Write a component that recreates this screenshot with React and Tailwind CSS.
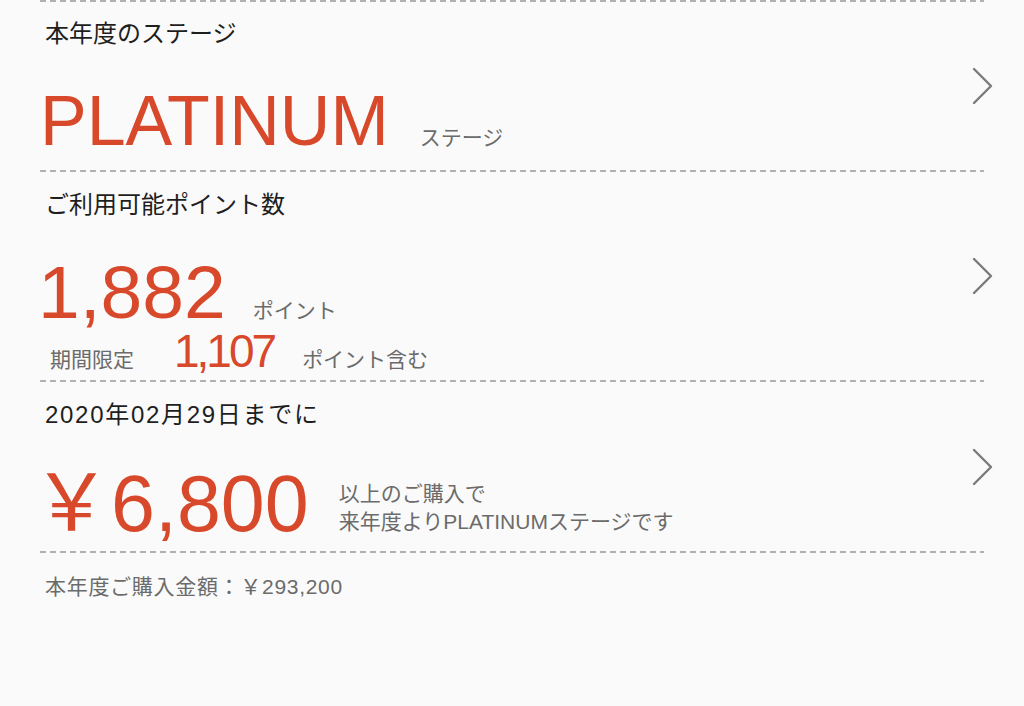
import React from "react";

const jp = { fontFamily: '"Liberation Sans", "Noto Sans CJK JP", sans-serif' };

function Dash() {
  return <div className="mx-[40px] h-[2px] bg-[repeating-linear-gradient(to_right,#b0b0b0_0_6px,transparent_6px_10px)]" />;
}

function Chevron() {
  return (
    <svg width="24" height="38" viewBox="0 0 24 38" className="shrink-0 self-center">
      <polyline points="3,2 20,19 3,36" fill="none" stroke="#7a7a7a" strokeWidth="2.4" strokeLinecap="round" strokeLinejoin="round" />
    </svg>
  );
}

function Row({ children, h }) {
  return (
    <div className={`flex justify-between pl-[40px] pr-[29px] ${h}`}>
      <div className="flex-1">{children}</div>
      <Chevron />
    </div>
  );
}

export default function App() {
  return (
    <div style={jp} className="w-[1024px] h-[706px] bg-[#fafafa] overflow-hidden">
      <Dash />
      <Row h="h-[168px]">
        <div className="pt-[16px] pl-[5px] text-[24px] leading-[32px] text-[#1e1e1e]">本年度のステージ</div>
        <div className="flex items-baseline mt-[36px]">
          <span className="text-[70px] leading-[70px] text-[#d8482a]">PLATINUM</span>
          <span className="ml-[31px] text-[21px] text-[#6b6b6b]">ステージ</span>
        </div>
      </Row>
      <Dash />
      <Row h="h-[208px]">
        <div className="pt-[17px] pl-[5px] text-[24px] leading-[32px] text-[#1e1e1e]">ご利用可能ポイント数</div>
        <div className="flex items-baseline mt-[33px]">
          <span className="-ml-[2px] text-[75px] leading-[76px] text-[#d8482a]">1,882</span>
          <span className="ml-[27px] text-[21px] text-[#6b6b6b]">ポイント</span>
        </div>
        <div className="flex items-baseline pl-[10px] -mt-[4px]">
          <span className="text-[21px] text-[#6b6b6b]">期間限定</span>
          <span className="ml-[40px] text-[46px] leading-[50px] tracking-[-3px] text-[#d8482a]">1,107</span>
          <span className="ml-[28px] text-[21px] text-[#6b6b6b]">ポイント含む</span>
        </div>
      </Row>
      <Dash />
      <Row h="h-[169px]">
        <div className="pt-[17px] pl-[5px] text-[24px] leading-[32px] tracking-[1.7px] text-[#1e1e1e]">2020年02月29日までに</div>
        <div className="flex items-end mt-[33px]">
          <span className="-ml-[8px] text-[79px] leading-[79px] text-[#d8482a]">￥6,800</span>
          <div className="ml-[30px] pb-[7px] text-[21px] leading-[28px] text-[#6b6b6b]">
            <div>以上のご購入で</div>
            <div>来年度よりPLATINUMステージです</div>
          </div>
        </div>
      </Row>
      <Dash />
      <div className="pl-[45px] pt-[20px] text-[21px] leading-[28px] tracking-[0.7px] text-[#6b6b6b]">本年度ご購入金額：￥293,200</div>
    </div>
  );
}
